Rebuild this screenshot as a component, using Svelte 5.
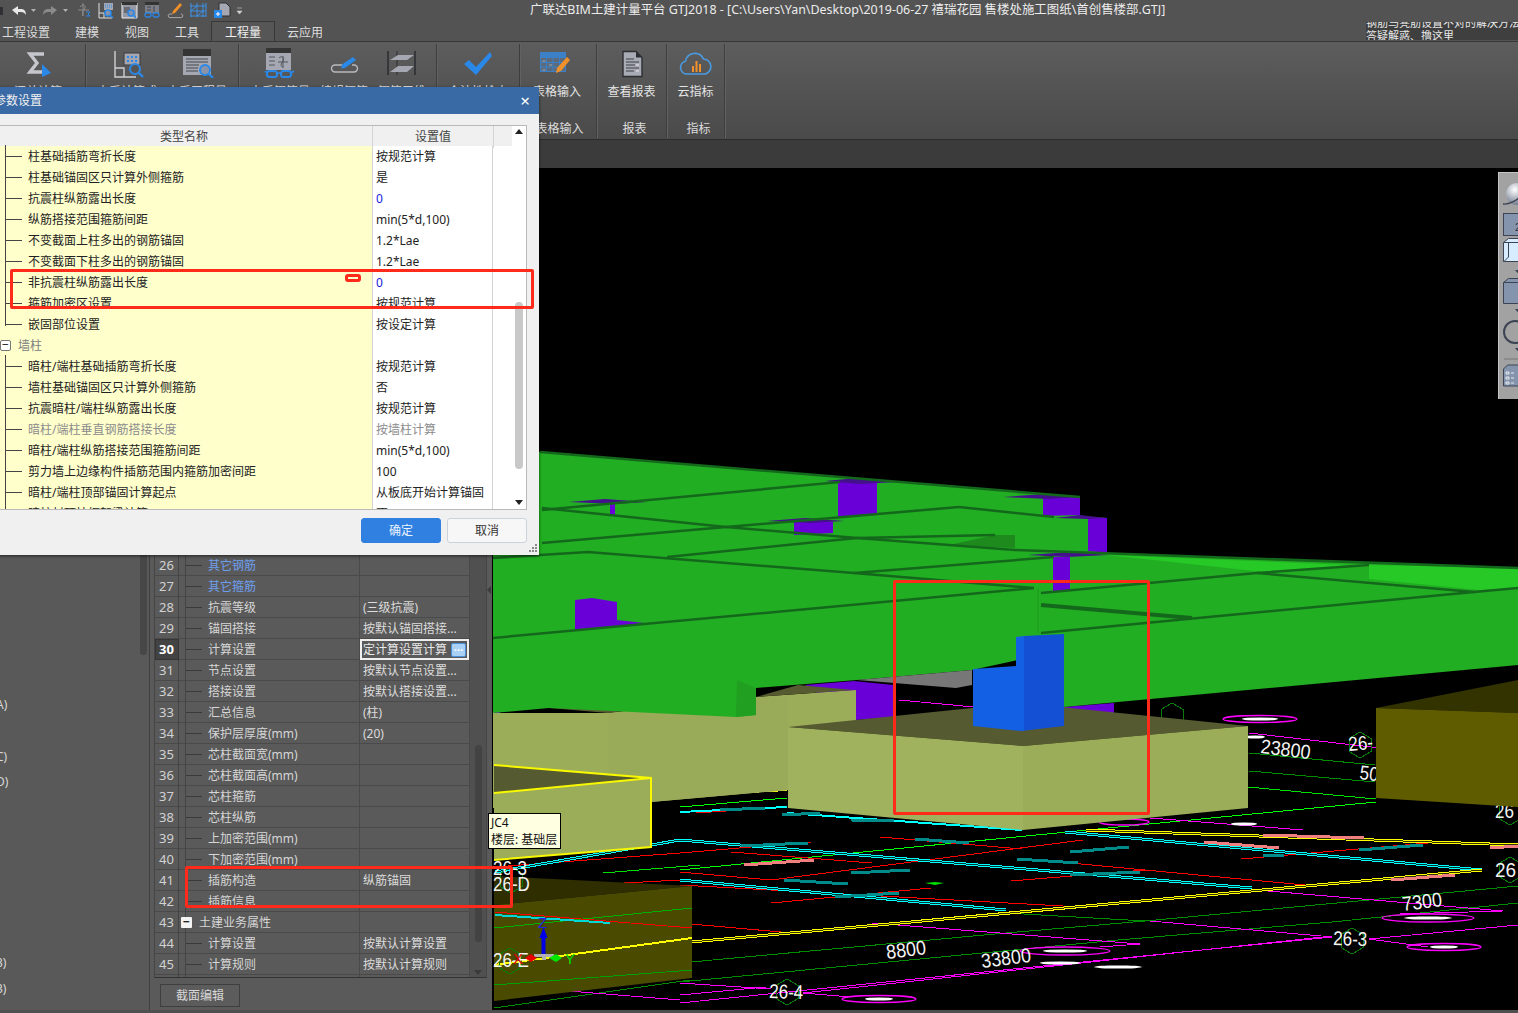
<script>
  // 参数设置 dialog rows
  const params = [
    { name: '柱基础插筋弯折长度', val: '按规范计算' },
    { name: '柱基础锚固区只计算外侧箍筋', val: '是' },
    { name: '抗震柱纵筋露出长度', val: '0', blue: true },
    { name: '纵筋搭接范围箍筋间距', val: 'min(5*d,100)' },
    { name: '不变截面上柱多出的钢筋锚固', val: '1.2*Lae' },
    { name: '不变截面下柱多出的钢筋锚固', val: '1.2*Lae' },
    { name: '非抗震柱纵筋露出长度', val: '0', blue: true },
    { name: '箍筋加密区设置', val: '按规范计算' },
    { name: '嵌固部位设置', val: '按设定计算', last: true },
    { name: '墙柱', val: '', group: true },
    { name: '暗柱/端柱基础插筋弯折长度', val: '按规范计算' },
    { name: '墙柱基础锚固区只计算外侧箍筋', val: '否' },
    { name: '抗震暗柱/端柱纵筋露出长度', val: '按规范计算' },
    { name: '暗柱/端柱垂直钢筋搭接长度', val: '按墙柱计算', dim: true },
    { name: '暗柱/端柱纵筋搭接范围箍筋间距', val: 'min(5*d,100)' },
    { name: '剪力墙上边缘构件插筋范围内箍筋加密间距', val: '100' },
    { name: '暗柱/端柱顶部锚固计算起点', val: '从板底开始计算锚固' },
    { name: '暗柱封顶按框架梁计算', val: '否' }
  ];

  // 属性列表 rows, the list is scrolled so only the tail shows
  const props = [
    [26, '其它钢筋', '', 'link'],
    [27, '其它箍筋', '', 'link'],
    [28, '抗震等级', '(三级抗震)'],
    [29, '锚固搭接', '按默认锚固搭接...'],
    [30, '计算设置', '定计算设置计算', 'sel'],
    [31, '节点设置', '按默认节点设置...'],
    [32, '搭接设置', '按默认搭接设置...'],
    [33, '汇总信息', '(柱)'],
    [34, '保护层厚度(mm)', '(20)'],
    [35, '芯柱截面宽(mm)', ''],
    [36, '芯柱截面高(mm)', ''],
    [37, '芯柱箍筋', ''],
    [38, '芯柱纵筋', ''],
    [39, '上加密范围(mm)', ''],
    [40, '下加密范围(mm)', ''],
    [41, '插筋构造', '纵筋锚固'],
    [42, '插筋信息', ''],
    [43, '土建业务属性', '', 'group'],
    [44, '计算设置', '按默认计算设置'],
    [45, '计算规则', '按默认计算规则'],
    [46, '', '']
  ];

  const sideRows = ['A)', '', 'C)', 'D)', '', '', '', '', '', '', '3)', '3)'];

  const groups = [
    { w: 86, pad: 0, capx: 0, cap: '汇总', items: [{ w: 76, label: '汇总计算', icon: 'sum' }] },
    { w: 153, pad: 6, capx: 0, cap: '土建计算结果', items: [{ w: 70, label: '查看计算式', icon: 'calc' }, { w: 70, label: '查看工程量', icon: 'qty' }] },
    { w: 198, pad: 9, capx: 0, cap: '钢筋计算结果', items: [{ w: 64, label: '查看钢筋量', icon: 'steel' }, { w: 64, label: '编辑钢筋', icon: 'edit' }, { w: 52, label: '钢筋三维', icon: 'layers' }] },
    { w: 83, pad: 0, capx: 0, cap: '检查', items: [{ w: 82, label: '合法性检查', icon: 'check' }] },
    { w: 77, pad: 2, capx: 1, cap: '表格输入', items: [{ w: 70, label: '表格输入', icon: 'table' }] },
    { w: 70, pad: 0, capx: 6, cap: '报表', items: [{ w: 69, label: '查看报表', icon: 'report' }] },
    { w: 58, pad: 0, capx: 6, cap: '指标', items: [{ w: 57, label: '云指标', icon: 'cloud' }] }
  ];

  const lines = [
    // dark and bright green grid
    { c: '#008c00', w: 1, p: '680,963 1006,933 1145,921 1518,886' },
    { c: '#008c00', w: 1, p: '680,982 1118,940 1332,922 1518,903' },
    { c: '#008c00', w: 1, p: '1006,913 1145,921' },
    { c: '#008c00', w: 1, p: '1249,753 1375,765' },
    { c: '#008c00', w: 1, p: '1249,771 1375,782' },
    { c: '#00e000', w: 1, p: '1248,787 1376,799' },
    { c: '#00ff00', w: 1, p: '1376,802 1067,832 680,870' },
    { c: '#00ff00', w: 1, p: '680,807 787,798' },
    { c: '#00e000', w: 1, p: '603,873 700,865' },
    { c: '#008c00', w: 1, p: '494,1008 690,980' },
    // magenta
    { c: '#ff00ff', w: 1, p: '899,700 974,707' },
    { c: '#ff00ff', w: 1, p: '1249,733 1380,748' },
    { c: '#ff00ff', w: 1, p: '1150,818 1303,830' },
    { c: '#ff00ff', w: 1, p: '680,995 766,987' },
    { c: '#ff00ff', w: 1, p: '803,993 1332,936' },
    { c: '#ff00ff', w: 1, p: '1369,939 1518,925' },
    { c: '#ff00ff', w: 1, p: '680,1003 1033,967 1332,937' },
    { c: '#ff00ff', w: 1, p: '872,923 1140,944 1100,947' },
    { c: '#ff00ff', w: 1, p: '1150,921 1321,936' },
    { c: '#ff00ff', w: 1, p: '1268,891 1503,911 1400,914' },
    { c: '#ff00ff', w: 1, p: '680,983 771,989' },
    { c: '#ff00ff', w: 1, p: '803,993 851,997' },
    { c: '#ff00ff', w: 1, p: '1369,939 1428,947' },
    { c: '#ff00ff', w: 1, p: '494,985 680,1000' },
    // red
    { c: '#ff0000', w: 1, p: '680,853 811,842' },
    { c: '#ff0000', w: 1, p: '880,837 1022,849' },
    { c: '#ff0000', w: 1, p: '731,852 872,863' },
    { c: '#ff0000', w: 1, p: '680,872 771,880 1083,840' },
    { c: '#ff0000', w: 1, p: '1011,881 1145,870' },
    { c: '#ff0000', w: 1, p: '1017,858 1305,885' },
    { c: '#ff0000', w: 1, p: '771,903 931,888' },
    { c: '#ff0000', w: 1, p: '680,885 1081,907' },
    { c: '#ff0000', w: 1, p: '1241,859 1428,843' },
    { c: '#ff0000', w: 1, p: '680,923 792,933' },
    { c: '#ff0000', w: 1, p: '495,867 680,853' },
    { c: '#ff0000', w: 1, p: '494,890 680,880' },
    { c: '#ff0000', w: 1, p: '696,813 787,807' },
    // cyan double
    { c: '#00ffff', w: 3, p: '680,840 1252,888', dbl: true },
    { c: '#00ffff', w: 3, p: '680,880 1006,910', dbl: true },
    { c: '#00ffff', w: 2, p: '787,813 1022,830' },
    { c: '#00ffff', w: 3, p: '1065,832 1482,870', dbl: true },
    { c: '#00ffff', w: 3, p: '495,872 680,840', dbl: true },
    { c: '#00ffff', w: 2, p: '680,812 787,807' },
    // yellow double
    { c: '#ffff00', w: 3, p: '494,962 680,943 1482,870', dbl: true },
    { c: '#ffff00', w: 3, p: '1086,830 1518,845', dbl: true },
    { c: '#ffff00', w: 2, p: '750,792 787,790' },
    // thick teal hatching
    { c: '#008b8b', w: 3, p: '720,810 765,808' },
    { c: '#008b8b', w: 3, p: '782,815 820,813' },
    { c: '#008b8b', w: 3, p: '851,820 894,821' },
    { c: '#008b8b', w: 3, p: '915,839 969,843' },
    { c: '#008b8b', w: 3, p: '1070,852 1129,847' },
    { c: '#008b8b', w: 3, p: '1017,859 1078,863' },
    { c: '#008b8b', w: 3, p: '1070,875 1140,872' },
    { c: '#008b8b', w: 3, p: '851,873 910,870' },
    { c: '#008b8b', w: 3, p: '784,880 848,884' },
    { c: '#008b8b', w: 3, p: '835,897 899,893' },
    { c: '#008b8b', w: 3, p: '741,846 808,843' },
    { c: '#008b8b', w: 3, p: '1263,855 1284,855' },
    { c: '#008b8b', w: 3, p: '1359,850 1423,845' },
    // salmon hatching
    { c: '#f08080', w: 3, p: '744,865 814,860' },
    { c: '#f08080', w: 3, p: '1263,835 1364,838' },
    { c: '#f08080', w: 3, p: '1204,842 1279,848' },
    { c: '#f08080', w: 3, p: '1391,880 1455,875' },
    { c: '#f08080', w: 3, p: '494,892 516,894' },
    { c: '#f08080', w: 3, p: '1490,848 1518,846' }
  ];

  const rings = [
    [1260, 719, 37, 3.5],
    [1428, 918, 46, 4],
    [1444, 947, 37, 3.5],
    [1065, 951, 45, 4],
    [879, 999, 37, 3.5],
    [1124, 822, 25, 3]
  ];
  const blobs = [
    [1260, 719, 18],
    [1428, 918, 24],
    [1444, 947, 14],
    [1065, 951, 22],
    [879, 999, 14],
    [1060, 963, 20],
    [1118, 967, 24],
    [1244, 824, 13],
    [1255, 737, 10]
  ];

  const hexes = [
    [1360, 745],
    [1352, 941],
    [787, 992],
    [1510, 812],
    [1510, 870],
    [1172, 716]
  ];

  const labels = [
    { t: '23800', x: 1260, y: 753, r: 7, s: 0.9 },
    { t: '26-', x: 1349, y: 751, r: -5, s: 0.85 },
    { t: '50', x: 1359, y: 779, r: 7, s: 0.85 },
    { t: '26', x: 1495, y: 818, r: 0, s: 0.85 },
    { t: '26', x: 1495, y: 877, r: 0, s: 0.95 },
    { t: '7300', x: 1403, y: 911, r: -7, s: 0.9 },
    { t: '26-3', x: 1333, y: 945, r: 2, s: 0.85 },
    { t: '33800', x: 982, y: 968, r: -7, s: 0.9 },
    { t: '8800', x: 887, y: 959, r: -7, s: 0.9 },
    { t: '26-4', x: 769, y: 998, r: 2, s: 0.85 }
  ];

  const pts = (cx, cy) =>
    [[0, -13], [11, -6.5], [11, 6.5], [0, 13], [-11, 6.5], [-11, -6.5]]
      .map(([a, b]) => `${cx + a},${cy + b}`)
      .join(' ');
</script>

{#snippet glyph(name)}
  <svg class="glyph" viewBox="0 0 44 30" width="44" height="30">
    {#if name === 'sum'}
      <path d="M28 6H14l7 9-7 9h14" fill="none" stroke="#c6c7cc" stroke-width="3.4" />
      <path d="M26 16l9 9-9 4z" fill="#2a88e8" />
    {:else if name === 'calc'}
      <path d="M10 3V29H31M10 20H19V29" fill="none" stroke="#cfcfd3" stroke-width="1.4" />
      <rect x="19" y="5" width="16" height="12" fill="#a3a6b0" stroke="#3b3b3b" />
      <path d="M22 8h2v2h-2zM26 8h2v2h-2zM30 8h2v2h-2zM22 12h2v2h-2zM26 12h2v2h-2zM30 12h2v2h-2z" fill="#2a88e8" />
      <circle cx="30" cy="21" r="5" fill="#555" stroke="#2a88e8" stroke-width="2" />
      <path d="M34 25l4 4" stroke="#2a88e8" stroke-width="2.4" />
    {:else if name === 'qty'}
      <rect x="8" y="1" width="28" height="7" fill="#353535" />
      <rect x="8" y="8" width="28" height="19" fill="#a5a8b2" />
      <path d="M11 11h22M11 14h22M11 17h13M11 20h12M11 23h12" stroke="#44464c" stroke-width="1" />
      <circle cx="30" cy="22" r="5" fill="#8a93a8" stroke="#2a88e8" stroke-width="2" />
      <path d="M34 26l4 4" stroke="#2a88e8" stroke-width="2.4" />
    {:else if name === 'steel'}
      <rect x="8" y="0" width="25" height="5" fill="#353535" />
      <rect x="8" y="5" width="25" height="17" fill="#a5a8b2" />
      <path d="M11 9h6M11 13h6M11 17h6M25 8v12M20 14h10M21 10c3-3 6 0 4 3s-3 5 0 6" fill="none" stroke="#55575d" />
      <rect x="9" y="23" width="10" height="6" rx="2.5" fill="none" stroke="#2a88e8" stroke-width="2" />
      <rect x="23" y="23" width="10" height="6" rx="2.5" fill="none" stroke="#2a88e8" stroke-width="2" />
      <path d="M19 25h4M9 25l-2-2M33 25l3-2" stroke="#2a88e8" stroke-width="1.6" />
    {:else if name === 'edit'}
      <path d="M20 17h-7a3.500 3.500 0 0 0 0 7h19a3.500 3.500 0 0 0 0-7h-2" fill="none" stroke="#b9b9bd" stroke-width="1.4" />
      <path d="M31 9l3 3-11 8-4 .5 1-4z" fill="#2a88e8" />
    {:else if name === 'layers'}
      <path d="M8 3V27M35 3V27" stroke="#2e2f33" stroke-width="1.6" />
      <path d="M17 3V27" stroke="#2e2f33" stroke-width="1" />
      <path d="M10 12l8-5h16l-7 5zM10 24l8-6h16l-7 6z" fill="#a5a8b2" />
    {:else if name === 'check'}
      <path d="M8 16l5-4 7 7 14-15 2 4-16 19z" fill="#2a88e8" />
    {:else if name === 'table'}
      <rect x="5.500" y="4.500" width="25" height="19" fill="#5d6a7a" stroke="#3c80c8" />
      <rect x="5" y="4" width="26" height="6" fill="#3c80c8" />
      <path d="M5 14.500H31M5 19H31M11.500 10V24M18 10V24M24.500 10V24" stroke="#3c80c8" />
      <path d="M7.500 13h3M14 17h3M7.500 22h3" stroke="#a5a8b2" />
      <path d="M32 9l3 3-9 11-5 2 1-5z" fill="#f0902a" />
    {:else if name === 'report'}
      <path d="M13 3.500H26L32 9.500V28.500H13Z" fill="#a8abb5" stroke="#2d2e33" stroke-width="1.4" />
      <path d="M26 3.500L32 9.500H26Z" fill="#2d2e33" />
      <path d="M16 11h8M16 14h13M16 17h9M16 20h13M16 23h8" stroke="#3c3e44" />
      <path d="M26 17h3M26 23h3" stroke="#e8e8e8" />
    {:else if name === 'cloud'}
      <path d="M13 26a6.500 6.500 0 0 1-1.500-12.800A9.500 9.500 0 0 1 29.500 11 7.600 7.600 0 0 1 31 26Z" fill="none" stroke="#4a9ae0" stroke-width="1.6" />
      <path d="M19 18v6M22.500 13v11M26 16v8" stroke="#f0902a" stroke-width="2" />
    {/if}
  </svg>
{/snippet}

<div class="app">
  <header class="titlebar">
    <svg class="qat" viewBox="0 0 250 22" width="250" height="22">
      <rect x="0" y="7" width="3" height="8" fill="#2f3033" />
      <path d="M12 10l6-4v3h3c3 0 5 2 5 6-1-2-3-3-5-3h-3v3z" fill="#e8e8e8" />
      <path d="M31 9h5l-2.500 3z" fill="#b0b0b0" />
      <path d="M57 10l-6-4v3h-3c-3 0-5 2-5 6 1-2 3-3 5-3h3v3z" fill="#8a8a8a" />
      <path d="M63 9h5l-2.500 3z" fill="#b0b0b0" />
      <path d="M78 10h11M83 3v13M80 7c2-3 6-2 5 1s-4 4-2 8" fill="none" stroke="#8c8c8c" />
      <path d="M86 12h4l-2 2 2 2h-4" fill="none" stroke="#2a88e8" />
      <path d="M99 3V18H112M99 13h5v5" fill="none" stroke="#e0e0e0" />
      <rect x="104" y="3" width="9" height="7" fill="#a5a8b2" />
      <path d="M105 5h7M105 7h7" stroke="#2a88e8" stroke-dasharray="1 1" />
      <circle cx="108" cy="13" r="3" fill="#8a93a8" stroke="#2a88e8" stroke-width="1.6" />
      <path d="M110 15l3 3" stroke="#2a88e8" stroke-width="1.6" />
      <path d="M122 3H137V18H122Z" fill="#9699a3" stroke="#f0f0f0" />
      <rect x="122" y="2" width="15" height="3" fill="#333" />
      <path d="M124 8h6M124 10h6M124 12h6" stroke="#3c3e44" />
      <circle cx="131" cy="13" r="3" fill="#8a93a8" stroke="#2a88e8" stroke-width="1.6" />
      <path d="M133 15l3 3" stroke="#2a88e8" stroke-width="1.6" />
      <rect x="145" y="2" width="14" height="3" fill="#333" />
      <rect x="145" y="5" width="14" height="8" fill="#7c7f88" />
      <path d="M147 7h4M147 10h4M154 6v6" stroke="#44464c" />
      <rect x="145" y="13" width="6" height="4" rx="1.500" fill="none" stroke="#2a88e8" stroke-width="1.300" />
      <rect x="153" y="13" width="6" height="4" rx="1.500" fill="none" stroke="#2a88e8" stroke-width="1.300" />
      <path d="M172 14h-2a1.800 1.800 0 0 0 0 3.600h11a1.800 1.800 0 0 0 0-3.600" fill="none" stroke="#a6a6a6" />
      <path d="M180 3l2 2-7 8-3 1 1-3z" fill="#f0902a" />
      <path d="M191 3V17M197 3V17M203 3V17M206 3V17M190 6H206M190 11H206M190 16H206M191 11l6-5M197 16l6-5" stroke="#3e92e6" fill="none" />
      <path d="M219 3H226L230 7V16H219Z" fill="#a5a8b2" stroke="#2f3033" />
      <rect x="214" y="10" width="8" height="8" fill="#2a88e8" />
      <path d="M216 14h4M218 12v4" stroke="#fff" />
      <path d="M237 8h5M237 11h5l-2.500 3z" fill="#cfcfcf" stroke="#cfcfcf" stroke-width=".6" />
    </svg>
    <div class="title">广联达BIM土建计量平台 GTJ2018 - [C:\Users\Yan\Desktop\2019-06-27 禧瑞花园 售楼处施工图纸\首创售楼部.GTJ]</div>
  </header>

  <nav class="tabs">
    <span class="tab first">工程设置</span>
    <span class="tab">建模</span>
    <span class="tab">视图</span>
    <span class="tab">工具</span>
    <span class="tab active">工程量</span>
    <span class="tab">云应用</span>
  </nav>

  <section class="ribbon">
    {#each groups as g}
      <div class="group" style="width:{g.w}px;padding-left:{g.pad}px">
        <div class="items">
          {#each g.items as it}
            <div class="item" style="width:{it.w}px">
              {@render glyph(it.icon)}
              <span>{it.label}</span>
            </div>
          {/each}
        </div>
        <div class="cap" style="padding-left:{g.capx}px">{g.cap}</div>
      </div>
    {/each}
  </section>
  <div class="strip"></div>

  <main class="main">
    <aside class="side">
      {#each sideRows as s}
        <div class="side-row">{s}</div>
      {/each}
      <div class="side-thumb"></div>
    </aside>

    <section class="panel">
      <div class="ptable">
        <div class="prows">
          <div class="plist">
            {#each props as [n, name, val, kind]}
              <div class="prow" class:sel={kind === 'sel'}>
                <div class="pnum">{n}</div>
                <div class="pgut"></div>
                <div class="pname" class:link={kind === 'link'}>
                  {#if kind === 'group'}
                    <span class="pbox">−</span>
                  {:else}
                    <span class="ptick"></span>
                  {/if}
                  {name}
                </div>
                <div class="pval">
                  <span>{val}</span>
                  {#if kind === 'sel'}<span class="more">···</span>{/if}
                </div>
              </div>
            {/each}
          </div>
        </div>
        <div class="psb">
          <div class="pthumb"></div>
          <div class="pdown"></div>
        </div>
      </div>
      <div class="pfoot">
        <button class="secedit">截面编辑</button>
      </div>
    </section>

    <section class="canvas">
      <svg viewBox="493 168 1025 842" width="1025" height="842">
        <rect x="493" y="168" width="1025" height="842" fill="#000" />

        <!-- floor plan lines -->
        <g shape-rendering="crispEdges">
          {#each lines as l}
            <polyline points={l.p} fill="none" stroke={l.c} stroke-width={l.w} />
            {#if l.dbl}<polyline points={l.p} fill="none" stroke="#000" stroke-width=".8" />{/if}
          {/each}
          {#each hexes as [cx, cy]}
            <polygon points={pts(cx, cy)} fill="none" stroke="#0a7a0a" />
          {/each}
        </g>
        {#each rings as [cx, cy, rx, ry]}
          <ellipse {cx} {cy} {rx} {ry} fill="none" stroke="#ff00ff" stroke-width="1.300" />
        {/each}
        {#each blobs as [cx, cy, rx]}
          <ellipse {cx} {cy} {rx} ry="1.600" fill="#fff" />
        {/each}
        <path d="M925 883l10-1 9 1-9 2z" fill="#00e000" />
        {#each labels as l}
          <text class="dim" transform="translate({l.x} {l.y}) rotate({l.r}) scale({l.s} 1)">{l.t}</text>
        {/each}

        <!-- lower purple, back foundations -->
        <polygon points="805,685 854,681 893,685 893,717 856,720" fill="#6a00d8" />
        <polygon points="1064,707 1114,703 1114,715 1064,722" fill="#6a00d8" />
        <polygon points="493,687 500,687 500,780 493,780" fill="#6a00d8" />
        <polygon points="493,713 608,713 756,697 856,690 856,727 788,727 788,790 651,802 493,808" fill="#9cad5a" />
        <polygon points="608,713 756,697 788,697 788,790 651,802 608,808" fill="#99aa58" />
        <polygon points="756,697 798,685 854,690" fill="#555a30" />
        <polygon points="549,708 592,705 647,708 608,713" fill="#555a30" />

        <!-- green floor plates -->
        <polygon points="493,448 1080,497 1080,516 1107,518 1107,553 1518,568 1518,665 1064,707 1064,650 972,670 857,680 756,688 756,715 736,717 549,708 493,713" fill="#22ae22" />
        <polygon points="1107,555 1349,565 1264,572" fill="#26c926" />
        <polygon points="1369,565 1518,568 1518,588 1480,590 1369,579" fill="#26c926" />
        <polygon points="949,545 995,535 1015,535 1015,548" fill="#1e8a1e" />
        <polygon points="737,680 756,688 756,715 736,717" fill="#209f20" />

        <!-- upper purple columns and their caps -->
        <polygon points="838,482 877,482 877,515 838,517" fill="#6a00d8" />
        <polygon points="825,481 857,478 897,482 860,484" fill="#45108c" />
        <polygon points="1043,497 1080,497 1080,515 1043,516" fill="#6a00d8" />
        <polygon points="1003,497 1044,494 1080,497 1048,499" fill="#45108c" />
        <polygon points="794,522 833,522 833,533 794,535" fill="#6a00d8" />
        <polygon points="767,521 805,518 844,521 811,523" fill="#45108c" />
        <polygon points="610,503 615,503 615,515 610,515" fill="#6a00d8" />
        <polygon points="569,502 605,499 647,502 615,504" fill="#45108c" />
        <polygon points="1088,518 1107,518 1107,553 1088,551" fill="#6a00d8" />
        <polygon points="1055,518 1080,515 1107,518 1087,519" fill="#45108c" />
        <polygon points="1053,557 1070,557 1070,590 1053,592" fill="#6a00d8" />
        <polygon points="1028,555 1070,552 1108,555 1067,557" fill="#45108c" />
        <polygon points="575,600 592,598 617,602 617,620 644,623 617,626 575,630" fill="#6a00d8" />

        <!-- beam edges on the plates -->
        <g fill="none" stroke="#14681c" stroke-width="2.500">
          <polyline points="540,452 1080,497" />
          <polyline points="542,510 840,482" />
          <polyline points="959,507 1054,517" />
          <polyline points="542,543 726,527 959,507" />
          <polyline points="542,508 726,527 857,538 1015,550 1518,568" />
          <polyline points="667,557 857,538 995,535" />
          <polyline points="493,558 588,552 854,573 1034,588" />
          <polyline points="854,573 1054,557" />
          <polyline points="1041,593 1257,573 1369,565" />
          <polyline points="1257,573 1474,592" />
          <polyline points="1041,605 1192,618" stroke-width="4" />
          <polyline points="493,638 1034,588" />
          <polyline points="1041,633 1198,618 1474,592 1518,588" />
        </g>
        <polyline points="1038,588 1038,633" stroke="#1f9a1f" />

        <polygon points="857,680 972,670 972,685 956,688" fill="#777" />

        <!-- middle foundation with the selected column -->
        <polygon points="788,727 1021,703 1248,726 1023,746" fill="#555a30" />
        <polygon points="788,727 1023,746 1023,830 788,808" fill="#a0b25d" />
        <polygon points="1023,746 1248,726 1248,808 1023,830" fill="#9cad5a" />
        <polygon points="973,669 1016,666 1016,637 1024,636 1024,731 1021,731 973,726" fill="#1460e4" />
        <polygon points="1024,636 1064,634 1064,726 1021,731 1024,731" fill="#1450d4" />

        <!-- selected foundation -->
        <polygon points="494,765 651,778 494,793" fill="#555a30" />
        <polygon points="494,793 651,778 651,847 494,860" fill="#9cad5a" />
        <polyline points="494,765 651,778 651,847 494,860" fill="none" stroke="#f8f800" stroke-width="2" />
        <polyline points="494,793 651,778" fill="none" stroke="#f8f800" stroke-width="2" />

        <!-- dark foundations -->
        <polygon points="1376,708 1518,680 1518,713" fill="#333300" />
        <polygon points="1376,708 1518,713 1518,807 1376,798" fill="#5f5c00" />
        <polygon points="494,876 692,886 494,905" fill="#2e2e00" />
        <polygon points="494,905 692,886 692,978 494,1001" fill="#4a4a00" />
        <g shape-rendering="crispEdges">
          <polyline points="494,965 692,938" fill="none" stroke="#ffff00" stroke-width="2" />
          <polyline points="494,928 692,908" fill="none" stroke="#00b000" />
          <polyline points="495,912 692,928" fill="none" stroke="#ff0000" />
          <polyline points="495,915 610,923" fill="none" stroke="#00d8d8" stroke-width="2" />
          <polyline points="494,985 692,970" fill="none" stroke="#00a000" />
          <polygon points={pts(510, 961)} fill="none" stroke="#0a7a0a" />
          <polygon points={pts(511, 880)} fill="none" stroke="#0a7a0a" />
        </g>

        <text class="dim" transform="translate(493 875) scale(.85 1)">26-3</text>
        <text class="dim" transform="translate(493 891) scale(.85 1)">26-D</text>
        <text class="dim" transform="translate(493 967) scale(.85 1)">26-E</text>

        <!-- axis gizmo -->
        <path d="M541.500 938h4v16h-4z" fill="#0000e8" />
        <path d="M543.500 927l4 11h-8z" fill="#0000e8" />
        <path d="M534 954h20v3h-8v3h-4v-3h-8z" fill="#b0b0b0" />
        <path d="M525 958l6-4 6 4-6 4z" fill="#e80000" />
        <path d="M549 958l7-4 6 4-6 4z" fill="#00e800" />
        <text class="axis" x="538" y="928" fill="#2020e8">Z</text>
        <text class="axis" x="513" y="964" fill="#e00000">X</text>
        <text class="axis" x="565" y="964" fill="#00e000">Y</text>
      </svg>

      <div class="viewbar">
        <svg viewBox="0 0 20 226" width="20" height="226">
          <defs>
            <radialGradient id="orb" cx=".4" cy=".3" r=".8">
              <stop offset="0" stop-color="#fff" />
              <stop offset="1" stop-color="#5f6b80" />
            </radialGradient>
          </defs>
          <circle cx="18" cy="21" r="11" fill="url(#orb)" />
          <path d="M4 31c5 1 16-4 19-10" fill="none" stroke="#3c4454" stroke-width="1.400" />
          <rect x="4.500" y="40.500" width="20" height="22" fill="#8494ad" stroke="#3c4454" />
          <text class="barnum" x="16" y="58">2</text>
          <path d="M4.500 69.500l5-4h14v23h-19zM4.500 69.500h20M9.500 70v14l-5 5" fill="#d8ecff" stroke="#3c4454" />
          <path d="M16 97h5l-2.500 3z" fill="#3c4454" />
          <path d="M4.500 109.500l5-4h14v25h-19z" fill="#8494ad" stroke="#3c4454" />
          <path d="M4.500 109.500h20" stroke="#3c4454" />
          <path d="M16 136h5l-2.500 3z" fill="#3c4454" />
          <circle cx="16" cy="159" r="11" fill="none" stroke="#3c4454" stroke-width="2" />
          <path d="M16 175h5l-2.500 3z" fill="#3c4454" />
          <path d="M5 186h15" stroke="#777" />
          <path d="M4.500 196l4-4h16v21h-20z" fill="#8494ad" stroke="#3c4454" />
          <path d="M7 199h3v2H7zM7 204h3v2H7zM7 209h3v2H7zM12 200h3M12 205h3M12 210h3" fill="none" stroke="#fff" stroke-width=".8" />
        </svg>
      </div>
    </section>
  </main>
  <div class="baseline"></div>

  <div class="notice">
    <div>钢筋马凳筋设置不对的解决方法</div>
    <div>答疑解惑、撸这里</div>
  </div>

  <div class="splitgrip"></div>

  <div class="tip">
    <div>JC4</div>
    <div>楼层: 基础层</div>
  </div>

  <!-- 参数设置 dialog -->
  <div class="dialog">
    <div class="dlg-title">
      <span class="dlg-name">参数设置</span>
      <span class="close">×</span>
    </div>
    <div class="dlg-body">
      <div class="grid">
        <div class="grid-main">
          <div class="ghead">
            <div>类型名称</div>
            <div>设置值</div>
          </div>
          {#each params as p}
            <div class="grow" class:dimmed={p.dim}>
              <div class="gname" class:last={p.last} class:groupc={p.group}>
                {#if p.group}<span class="gbox">−</span>{/if}
                <span>{p.name}</span>
              </div>
              <div class="gval" class:blue={p.blue}>{p.val}</div>
            </div>
          {/each}
        </div>
        <div class="gsb">
          <div class="gup"></div>
          <div class="gthumb"></div>
          <div class="gdown"></div>
        </div>
      </div>
      <div class="dlg-foot">
        <button class="ok">确定</button>
        <button class="cancel">取消</button>
      </div>
      <svg class="grip" viewBox="0 0 8 8" width="8" height="8">
        <path d="M6 0h2v2H6zM3 3h2v2H3zM6 3h2v2H6zM0 6h2v2H0zM3 6h2v2H3zM6 6h2v2H6z" fill="#8a8a8a" />
      </svg>
    </div>
  </div>

  <!-- hand-drawn review marks -->
  <div class="mark m1"></div>
  <div class="mark m2"></div>
  <div class="mark m3"></div>
  <div class="mark m4"></div>
</div>

<style>
  :global(body) {
    margin: 0;
    background: #535353;
  }

  .app {
    position: relative;
    width: 1518px;
    height: 1013px;
    overflow: hidden;
    display: flex;
    flex-direction: column;
    background: #535353;
    color: #e0e0e0;
    font: 12px/1.2 "Noto Sans", "Noto Sans CJK SC", sans-serif;
  }

  .titlebar {
    display: flex;
    height: 22px;
    flex: none;
    align-items: center;
  }

  .qat {
    display: block;
    flex: none;
  }

  .title {
    margin-left: 280px;
    white-space: nowrap;
    color: #ececec;
    font-size: 12.440px;
    margin-top: -2px;
  }

  .tabs {
    display: flex;
    height: 20px;
    flex: none;
    align-items: stretch;
    border-bottom: 1px solid #383838;
    box-sizing: border-box;
  }

  .tab {
    padding: 2px 13px 0;
    line-height: 17px;
    color: #dcdcdc;
  }

  .tab.first {
    padding-left: 2px;
    padding-right: 12px;
  }

  .tab.active {
    height: 20px;
    margin: -1px -1px 0 -1px;
    box-sizing: border-box;
    border: 1px solid #383838;
    border-bottom: 0;
    background: #565656;
    color: #f0f0f0;
  }

  .ribbon {
    display: flex;
    height: 98px;
    flex: none;
    box-sizing: border-box;
    padding-top: 2px;
    background: linear-gradient(#5d5d5d, #4a4a4a);
    border-bottom: 1px solid #2c2c2c;
  }

  .group {
    display: flex;
    flex-direction: column;
    box-sizing: border-box;
    border-right: 1px solid #3e3e3e;
    box-shadow: 1px 0 0 #626262;
    height: 94px;
  }

  .items {
    display: flex;
    height: 74px;
  }

  .item {
    display: flex;
    flex-direction: column;
    align-items: center;
    color: #e4e4e4;
    white-space: nowrap;
    padding-top: 4px;
  }

  .item span {
    margin-top: 7px;
  }

  .glyph {
    display: block;
    flex: none;
  }

  .cap {
    text-align: center;
    color: #dcdcdc;
    line-height: 16px;
    margin-top: 3px;
  }

  .strip {
    height: 28px;
    flex: none;
    background: #3b3b3b;
  }

  .main {
    display: flex;
    height: 842px;
    flex: none;
  }

  .side {
    position: relative;
    flex: none;
    background: #595959;
    border-right: 1px solid #3f3f3f;
    padding-top: 524px;
    overflow: hidden;
    box-sizing: border-box;
    width: 150px;
  }

  .side-row {
    height: 25.800px;
    line-height: 25.800px;
    color: #d8d8d8;
    white-space: nowrap;
    margin-left: -4px;
  }

  .side-thumb {
    position: absolute;
    left: 140px;
    top: 0;
    width: 7px;
    height: 487px;
    border-radius: 0 0 4px 4px;
    background: #474747;
  }

  .panel {
    width: 343px;
    flex: none;
    box-sizing: border-box;
    display: flex;
    flex-direction: column;
    padding-left: 4px;
    border-right: 1px solid #000;
    background: #5a5a5a;
  }

  .ptable {
    display: flex;
    height: 810px;
    flex: none;
    width: 333px;
    box-sizing: border-box;
    border-bottom: 1px solid #333;
    border-left: 1px solid #454545;
    border-right: 1px solid #454545;
    background: #5a5a5a;
  }

  .prows {
    display: flex;
    flex-direction: column;
    justify-content: flex-end;
    width: 315px;
    overflow: hidden;
    flex: none;
  }

  .plist {
    margin-bottom: -19px;
  }

  .prow {
    display: grid;
    grid-template-columns: 24px 7px 174px 110px;
    height: 21px;
    box-sizing: border-box;
    border-bottom: 1px solid #4a4a4a;
    line-height: 21px;
  }

  .pnum {
    text-align: center;
    color: #d2d2d2;
    border-right: 1px solid #444;
    font-size: 13px;
  }

  .pgut {
    border-right: 1px solid #444;
  }

  .pname {
    display: flex;
    align-items: center;
    color: #d6d6d6;
    white-space: nowrap;
    border-right: 1px solid #4a4a4a;
  }

  .ptick {
    width: 16px;
    height: 1px;
    background: #3a3a3a;
    margin-right: 6px;
  }

  .pname.link {
    color: #6e9fee;
  }

  .pbox {
    width: 11px;
    height: 11px;
    flex: none;
    background: #f4f4f4;
    color: #222;
    border-radius: 1px;
    line-height: 10px;
    text-align: center;
    font-weight: 700;
    margin-right: 7px;
    margin-left: -5px;
  }

  .pval {
    display: flex;
    align-items: center;
    justify-content: space-between;
    padding-left: 3px;
    color: #dcdcdc;
    white-space: nowrap;
    border-right: 1px solid #4a4a4a;
    overflow: hidden;
  }

  .prow.sel .pnum {
    background: #434343;
    color: #fff;
    font-weight: 700;
    outline: 1px solid #353535;
    outline-offset: -1px;
  }

  .prow.sel .pval {
    box-shadow: inset 0 0 0 2px #efefef;
    padding-right: 3px;
    color: #e8e8e8;
  }

  .more {
    width: 15px;
    height: 14px;
    line-height: 11px;
    text-align: center;
    color: #fff;
    font-weight: 700;
    font-size: 11px;
    background: #a9d1f6;
    border: 1px solid #4a90d8;
    border-radius: 2px;
    box-sizing: border-box;
  }

  .psb {
    display: flex;
    flex-direction: column;
    align-items: center;
    width: 16px;
    padding-top: 577px;
    box-sizing: border-box;
    background: #505050;
  }

  .pthumb {
    width: 7px;
    height: 197px;
    border-radius: 4px;
    background: #434343;
  }

  .pdown {
    margin-top: auto;
    margin-bottom: 2px;
    border: 4px solid transparent;
    border-top: 5px solid #3a3a3a;
    border-bottom: 0;
  }

  .pfoot {
    padding: 6px 0 0 6px;
  }

  .secedit {
    display: block;
    width: 80px;
    height: 23px;
    padding: 1px 0 0;
    font: inherit;
    color: #d8d8d8;
    background: #5c5c5c;
    border: 1px solid #3f3f3f;
  }

  .canvas {
    position: relative;
    flex: 1;
    overflow: hidden;
    background: #000;
  }

  .canvas svg {
    display: block;
  }

  .canvas text {
    font-family: "Liberation Sans", sans-serif;
  }

  .dim {
    font-size: 20px;
    fill: #f4f4f4;
  }

  .axis {
    font-size: 15px;
  }

  .viewbar {
    position: absolute;
    top: 4px;
    left: 1005px;
    width: 20px;
    height: 226px;
    background: #a2a2a2;
    border-left: 1px solid #c4c4c4;
    border-top: 1px solid #c4c4c4;
    overflow: hidden;
  }

  .barnum {
    font-size: 11px;
    fill: #2c3444;
  }

  .baseline {
    flex: 1;
    background: #4f4f4f;
  }

  .notice {
    position: absolute;
    left: 1366px;
    top: 22px;
    width: 152px;
    height: 18px;
    overflow: hidden;
    display: flex;
    flex-direction: column;
    justify-content: flex-end;
    background: #3f3f3f;
    color: #e8e8e8;
    font-size: 11px;
    line-height: 13px;
    white-space: nowrap;
  }

  .notice div:last-child {
    margin-bottom: -2px;
  }

  .splitgrip {
    position: absolute;
    left: 487px;
    top: 586px;
    border: 4px solid transparent;
    border-right: 4px solid #3a3a3a;
    border-left: 0;
  }

  .tip {
    position: absolute;
    left: 488px;
    top: 813px;
    width: 73px;
    height: 36px;
    box-sizing: border-box;
    padding: 0 2px;
    background: #ffffe1;
    border: 1px solid #000;
    color: #111;
    line-height: 17px;
    white-space: nowrap;
  }

  .dialog {
    position: absolute;
    left: -16px;
    top: 87px;
    width: 555px;
    height: 468px;
    display: flex;
    flex-direction: column;
    background: #f0f0f0;
    color: #222;
    box-shadow: 0 1px 3px rgba(0, 0, 0, 0.6);
  }

  .dlg-title {
    display: flex;
    align-items: center;
    justify-content: space-between;
    height: 27px;
    flex: none;
    padding: 0 10px;
    background: #3a6aa5;
    color: #f2f2f2;
  }

  .dlg-name {
    padding-top: 2px;
  }

  .close {
    font-size: 17px;
    line-height: 17px;
    color: #fff;
    margin-right: -1px;
  }

  .dlg-body {
    position: relative;
    flex: 1;
    padding: 11px 12px 0 11px;
    display: flex;
    flex-direction: column;
  }

  .grid {
    display: flex;
    height: 385px;
    flex: none;
    box-sizing: border-box;
    border: 1px solid #b9b9b9;
    background: #fff;
    overflow: hidden;
  }

  .grid-main {
    flex: 1;
    min-width: 0;
  }

  .ghead {
    display: grid;
    grid-template-columns: 377px 1fr;
    height: 20px;
    line-height: 22px;
    background: #f0f0f0;
    color: #444;
    text-align: center;
  }

  .ghead div:first-child {
    border-right: 1px solid #d4d4d4;
  }

  .ghead div:last-child {
    width: 120px;
    border-right: 1px solid #d4d4d4;
  }

  .grow {
    display: grid;
    grid-template-columns: 377px 120px;
    height: 21px;
    line-height: 22px;
  }

  .gname {
    position: relative;
    box-sizing: border-box;
    background: #ffffcc;
    border-right: 1px solid #d4d4d4;
    border-bottom: 1px solid #d4d4d4;
    padding-left: 32px;
    white-space: nowrap;
  }

  .gname::before {
    content: "";
    position: absolute;
    left: 9px;
    top: -1px;
    bottom: -1px;
    width: 1px;
    background: #444;
  }

  .gname::after {
    content: "";
    position: absolute;
    left: 10px;
    width: 16px;
    top: 10px;
    height: 1px;
    background: #444;
  }

  .gname.last::before {
    bottom: 10px;
  }

  .gname.groupc {
    padding-left: 22px;
    color: #808080;
  }

  .gname.groupc::before,
  .gname.groupc::after {
    display: none;
  }

  .gbox {
    position: absolute;
    left: 4px;
    top: 5px;
    width: 11px;
    height: 11px;
    box-sizing: border-box;
    border: 1px solid #777;
    border-radius: 2px;
    background: #fff;
    line-height: 8px;
    text-align: center;
    color: #222;
  }

  .gval {
    box-sizing: border-box;
    padding-left: 3px;
    border-right: 1px solid #d4d4d4;
    border-bottom: 1px solid #d4d4d4;
    white-space: nowrap;
    overflow: hidden;
    background: #fff;
  }

  .gval.blue {
    color: #2020e0;
  }

  .grow.dimmed .gname,
  .grow.dimmed .gval {
    color: #8c8c8c;
  }

  .gsb {
    display: flex;
    flex-direction: column;
    align-items: center;
    width: 14px;
    flex: none;
    background: #fff;
    padding: 2px 0;
    box-sizing: border-box;
  }

  .gup {
    border: 4px solid transparent;
    border-bottom: 5px solid #222;
    border-top: 0;
    margin-top: 1px;
  }

  .gthumb {
    width: 8px;
    height: 167px;
    margin-top: 168px;
    border-radius: 4px;
    background: #c8c8c8;
  }

  .gdown {
    margin-top: auto;
    margin-bottom: 2px;
    border: 4px solid transparent;
    border-top: 5px solid #222;
    border-bottom: 0;
  }

  .dlg-foot {
    display: flex;
    justify-content: flex-end;
    gap: 6px;
    margin-top: 8px;
  }

  .dlg-foot button {
    width: 80px;
    height: 25px;
    padding: 1px 0 0;
    border-radius: 3px;
    font: inherit;
  }

  .ok {
    background: #2f80e0;
    border: 1px solid #2f80e0;
    color: #eaf3ff;
  }

  .cancel {
    background: #f7f7f7;
    border: 1px solid #ccd2dc;
    color: #333;
  }

  .grip {
    position: absolute;
    right: 2px;
    bottom: 3px;
  }

  .mark {
    position: absolute;
    box-sizing: border-box;
    border: 3px solid #ff2a1a;
    border-radius: 2px;
  }

  .m1 {
    left: 10px;
    top: 269px;
    width: 524px;
    height: 40px;
  }

  .m2 {
    left: 345px;
    top: 274px;
    width: 16px;
    height: 8px;
    border-radius: 3px;
  }

  .m3 {
    left: 185px;
    top: 866px;
    width: 328px;
    height: 42px;
  }

  .m4 {
    left: 893px;
    top: 580px;
    width: 257px;
    height: 235px;
  }
</style>
